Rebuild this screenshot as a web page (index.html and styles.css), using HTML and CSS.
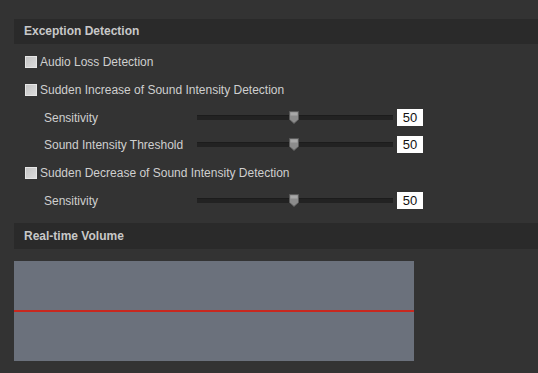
FILE: index.html
```html
<!DOCTYPE html>
<html lang="en">
<head>
    <meta charset="UTF-8">
    <title>Exception Detection</title>
    <link rel="stylesheet" href="styles.css">
</head>
<body>
    <div class="page">
        <div class="section-title">Exception Detection</div>
        <div class="rows">
            <label class="row check-row"><span class="box"></span>Audio Loss Detection</label>
            <label class="row check-row"><span class="box"></span>Sudden Increase of Sound Intensity Detection</label>
            <div class="row slider-row">
                <span class="slider-label">Sensitivity</span>
                <div class="track">
                    <svg class="thumb" width="10" height="13" viewBox="0 0 10 13"><polygon points="0.5,0.5 9.5,0.5 9.5,8.5 5,12.5 0.5,8.5" fill="#8c8c8c" stroke="#5a5a5a"/><rect x="1.5" y="1.5" width="7" height="3" fill="#a8a8a8"/></svg>
                </div>
                <span class="value">50</span>
            </div>
            <div class="row slider-row">
                <span class="slider-label">Sound Intensity Threshold</span>
                <div class="track">
                    <svg class="thumb" width="10" height="13" viewBox="0 0 10 13"><polygon points="0.5,0.5 9.5,0.5 9.5,8.5 5,12.5 0.5,8.5" fill="#8c8c8c" stroke="#5a5a5a"/><rect x="1.5" y="1.5" width="7" height="3" fill="#a8a8a8"/></svg>
                </div>
                <span class="value">50</span>
            </div>
            <label class="row check-row tall"><span class="box"></span>Sudden Decrease of Sound Intensity Detection</label>
            <div class="row slider-row">
                <span class="slider-label">Sensitivity</span>
                <div class="track">
                    <svg class="thumb" width="10" height="13" viewBox="0 0 10 13"><polygon points="0.5,0.5 9.5,0.5 9.5,8.5 5,12.5 0.5,8.5" fill="#8c8c8c" stroke="#5a5a5a"/><rect x="1.5" y="1.5" width="7" height="3" fill="#a8a8a8"/></svg>
                </div>
                <span class="value">50</span>
            </div>
        </div>
        <div class="section-title second">Real-time Volume</div>
        <div class="volume">
            <div class="level-line"></div>
        </div>
    </div>
</body>
</html>
```

FILE: styles.css
```css
body {
    margin: 0;
    padding: 0;
    background-color: #333333;
    font-family: "Liberation Sans", Arial, sans-serif;
    font-size: 12px;
    color: #cfcfcf;
}
.page {
    padding: 19px 0 0 14px;
}
.section-title {
    height: 25px;
    line-height: 25px;
    padding-left: 10px;
    background-color: #2a2a2a;
    font-weight: bold;
    color: #c8c8c8;
}
.section-title.second {
    margin-top: 9px;
    height: 26px;
    line-height: 26px;
}
.rows {
    padding-top: 4px;
}
.row {
    display: flex;
    align-items: center;
}
.check-row {
    height: 28px;
    padding-left: 11px;
}
.check-row.tall {
    height: 29px;
}
.box {
    width: 10px;
    height: 10px;
    margin-right: 3px;
    border: 1px solid #e6e6e6;
    background: linear-gradient(135deg, #c4c4c4, #dcdcdc);
}
.slider-row {
    height: 27px;
    padding-left: 30px;
}
.slider-label {
    width: 153px;
}
.track {
    position: relative;
    width: 196px;
    height: 4px;
    background-color: #222222;
    border-top: 1px solid #1c1c1c;
}
.thumb {
    position: absolute;
    left: 92px;
    top: -5px;
}
.value {
    margin-left: 4px;
    width: 26px;
    height: 17px;
    line-height: 17px;
    background-color: #ffffff;
    color: #111111;
    font-size: 13px;
    text-align: center;
}
.volume {
    margin-top: 12px;
    width: 400px;
    height: 100px;
    background-color: #6b717c;
    padding-top: 49px;
    box-sizing: border-box;
}
.level-line {
    height: 2px;
    background-color: #c8281f;
}
```
